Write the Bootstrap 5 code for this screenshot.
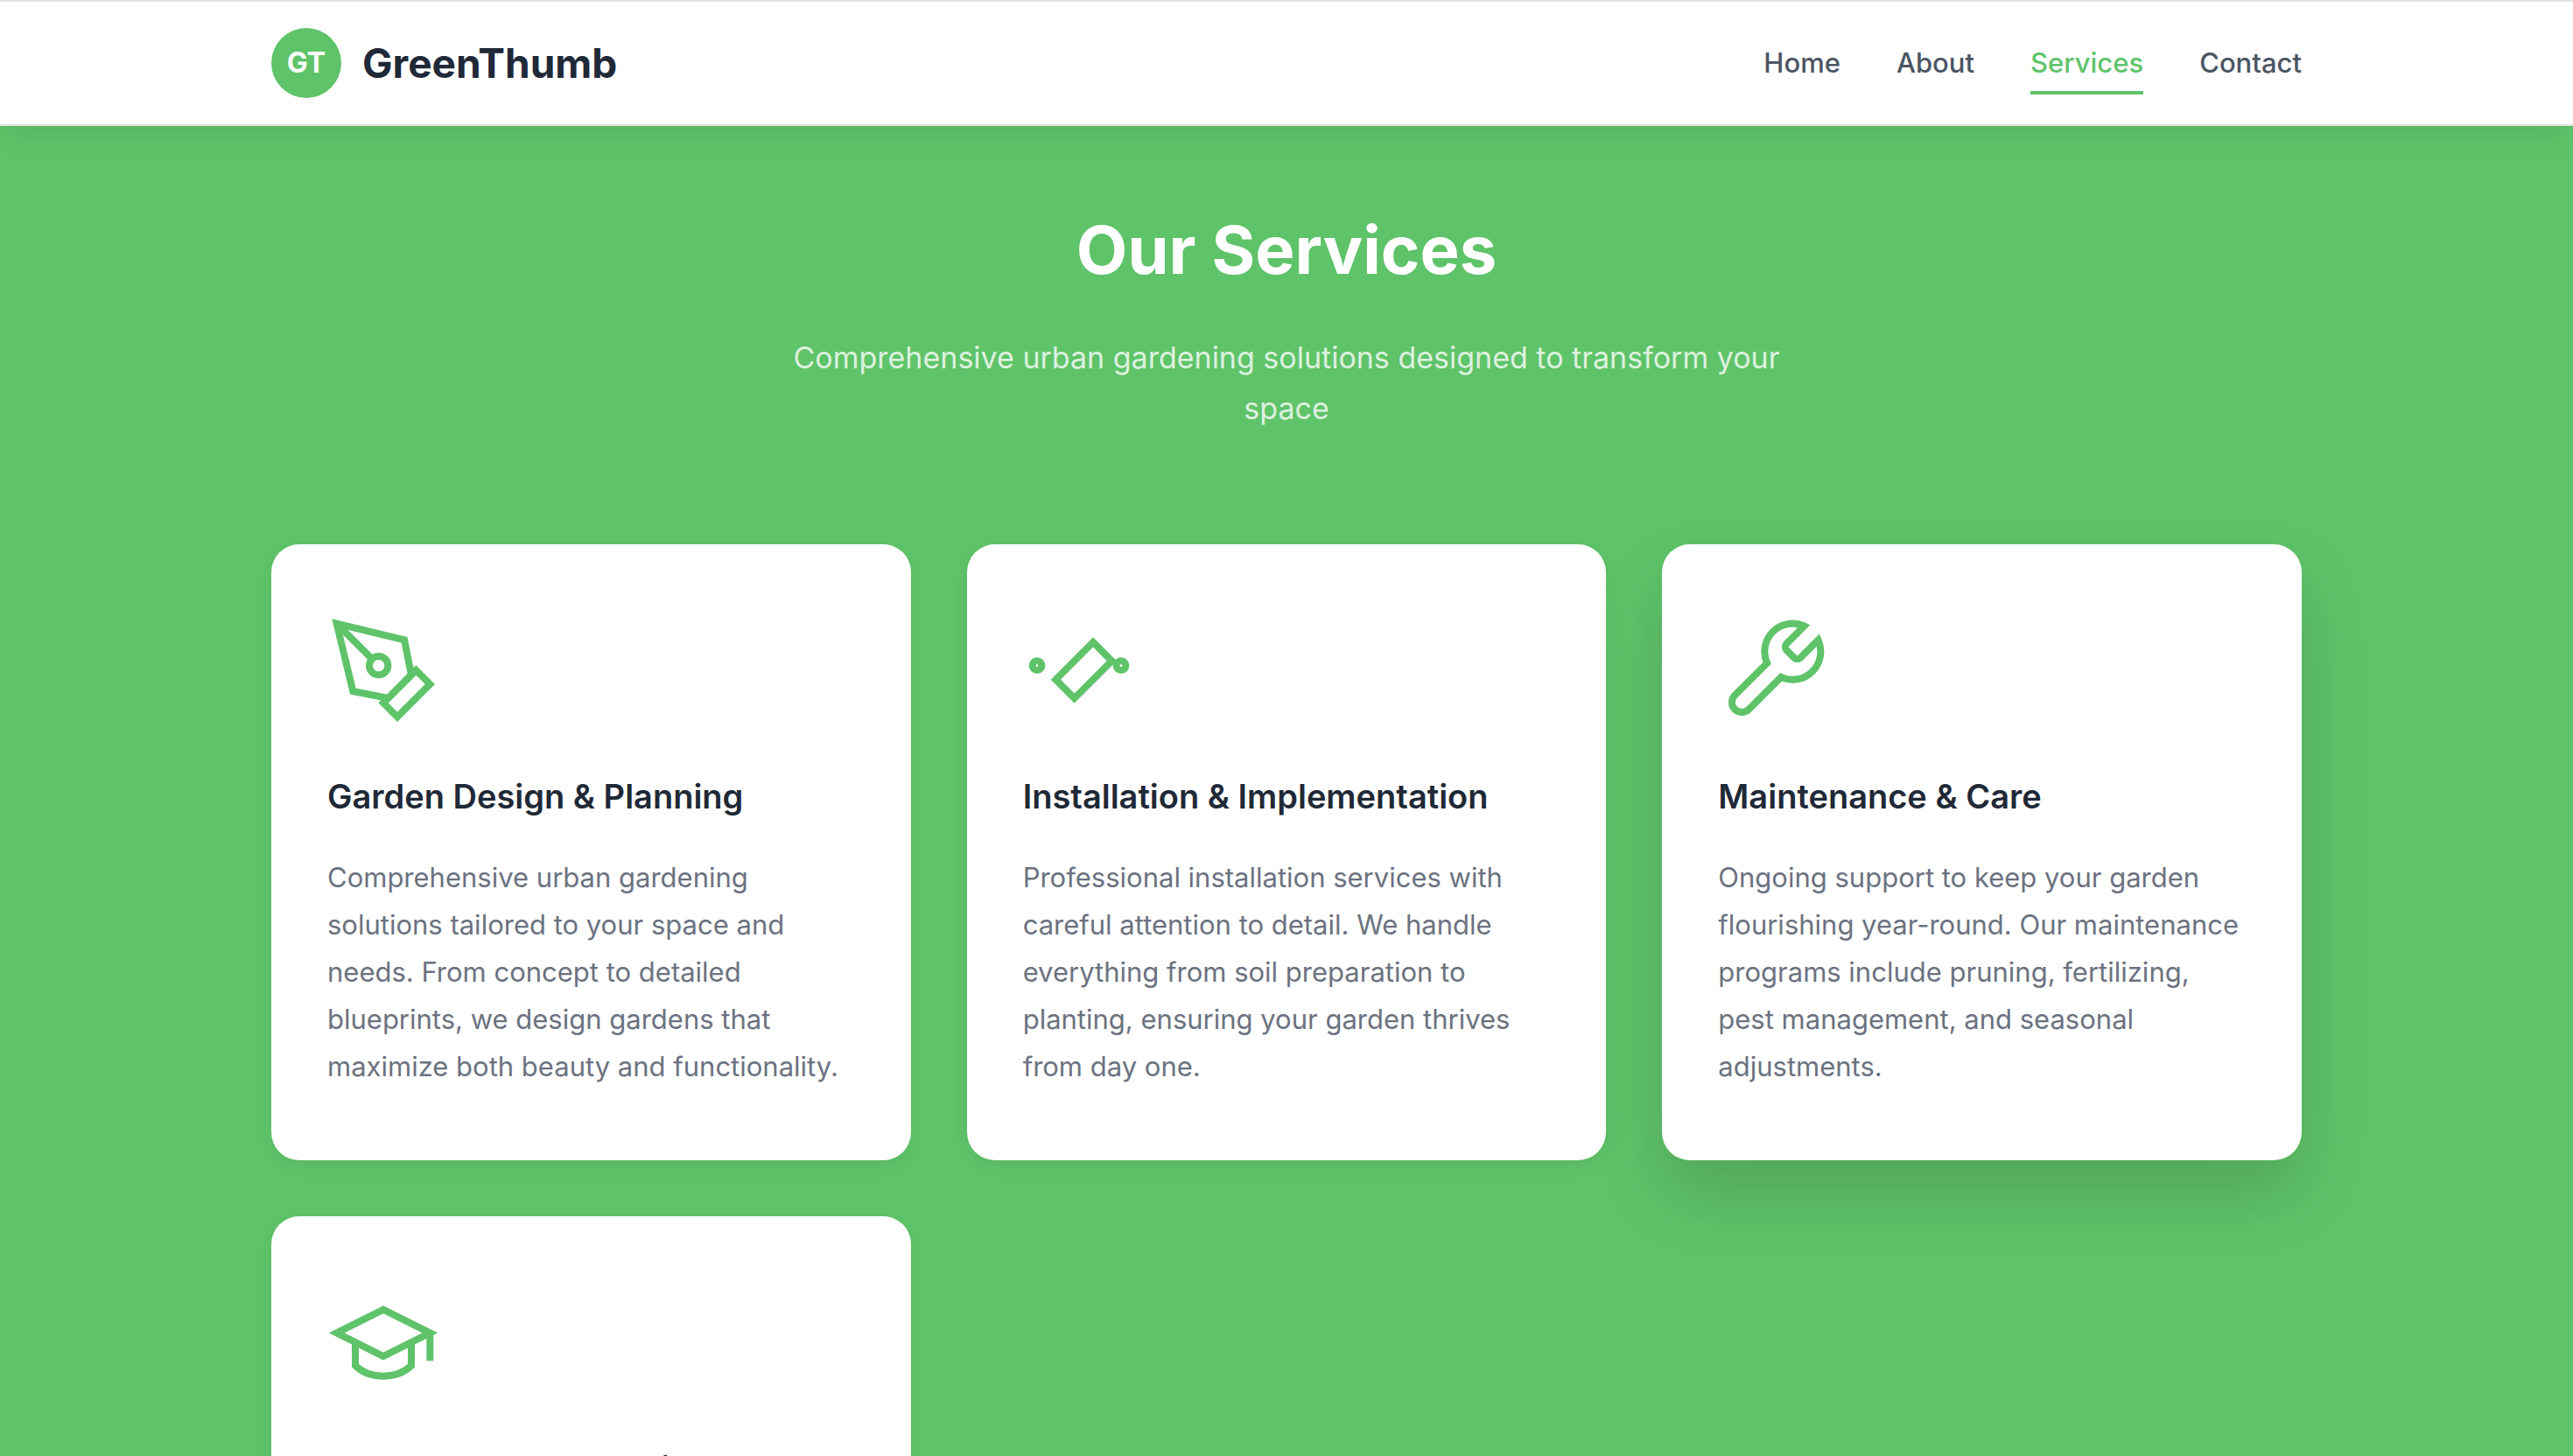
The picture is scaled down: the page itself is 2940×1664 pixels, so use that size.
<!DOCTYPE html>
<html lang="en">
<head>
<meta charset="utf-8">
<meta name="viewport" content="width=device-width, initial-scale=1">
<title>GreenThumb – Services</title>
<link href="https://cdn.jsdelivr.net/npm/bootstrap@5.3.0/dist/css/bootstrap.min.css" rel="stylesheet">
<style>
:root { --leaf: #5fc369; --ink: #1f2937; --slate: #4b5563; --stone: #6b7280; }
body { font-family: Inter, "Liberation Sans", sans-serif; font-size: 31px; background: var(--leaf); color: var(--ink); overflow-x: hidden; }
.page-width { width: 100%; max-width: 2320px; margin-inline: auto; }
.site-bar { border-block: 2px solid #e2e2e2; padding: 30px 0; box-shadow: 0 8px 40px rgba(0, 0, 0, .08); z-index: 2; }
.logo-disc { width: 80px; height: 80px; background: var(--leaf); font-size: 32px; font-weight: 700; line-height: 40px; }
.logo-name { font-size: 46px; font-weight: 700; line-height: 60px; color: var(--ink); }
.site-links { gap: 64px; }
.site-links .nav-link { padding: 16px 0 12px; border-bottom: 4px solid transparent; font-size: 31px; line-height: 40px; font-weight: 500; color: var(--slate); }
.site-links .nav-link.active { color: var(--leaf); border-color: var(--leaf); }
.hero { padding: 93px 0 126px; }
.hero-title { font-size: 76px; font-weight: 700; line-height: 96px; margin-bottom: 47px; }
.hero-text { max-width: 1200px; font-size: 34px; line-height: 58px; color: rgba(255, 255, 255, .8); }
.service-grid { --bs-gutter-x: 64px; --bs-gutter-y: 64px; }
.service-card { border: 0; border-radius: 32px; padding: 80px 64px; box-shadow: 0 8px 24px rgba(0, 0, 0, .06); }
.service-card.raised { box-shadow: 0 40px 80px rgba(0, 0, 0, .15); }
.service-card svg { width: 128px; height: 128px; fill: none; stroke: var(--leaf); stroke-width: 1.5; }
.service-card h2 { font-size: 38px; font-weight: 600; line-height: 52px; margin: 54px 0 40px; }
.service-card p { font-size: 31px; line-height: 54px; color: var(--stone); margin: 0; }
</style>
</head>
<body>
<header class="site-bar bg-white position-relative">
  <div class="page-width d-flex align-items-center justify-content-between">
    <a href="#" class="d-flex align-items-center gap-4 text-decoration-none">
      <span class="logo-disc rounded-circle text-white d-flex align-items-center justify-content-center">GT</span>
      <span class="logo-name">GreenThumb</span>
    </a>
    <nav class="nav site-links">
      <a class="nav-link" href="#">Home</a>
      <a class="nav-link" href="#">About</a>
      <a class="nav-link active" href="#" aria-current="page">Services</a>
      <a class="nav-link" href="#">Contact</a>
    </nav>
  </div>
</header>
<main class="page-width">
  <section class="hero text-center text-white">
    <h1 class="hero-title">Our Services</h1>
    <p class="hero-text mx-auto mb-0">Comprehensive urban gardening solutions designed to transform your space</p>
  </section>
  <section class="row service-grid row-cols-3">
    <div class="col">
      <article class="card service-card h-100">
        <svg viewBox="0 0 24 24" aria-hidden="true"><path d="M12 19l7-7 3 3-7 7-3-3z"/><path d="M18 13l-1.500-7.500L2 2l3.500 14.500L13 18l5-5z"/><path d="M2 2l7.586 7.586"/><circle cx="11" cy="11" r="2"/></svg>
        <h2>Garden Design &amp; Planning</h2>
        <p>Comprehensive urban gardening solutions tailored to your space and needs. From concept to detailed blueprints, we design gardens that maximize both beauty and functionality.</p>
      </article>
    </div>
    <div class="col">
      <article class="card service-card h-100">
        <svg viewBox="0 0 24 24" aria-hidden="true"><path d="M11 18l8-8-4-4-8 8 4 4z"/><circle cx="3" cy="11" r="1"/><circle cx="21" cy="11" r="1"/></svg>
        <h2>Installation &amp; Implementation</h2>
        <p>Professional installation services with careful attention to detail. We handle everything from soil preparation to planting, ensuring your garden thrives from day one.</p>
      </article>
    </div>
    <div class="col">
      <article class="card service-card raised h-100">
        <svg viewBox="0 0 24 24" aria-hidden="true"><path d="M14.700 6.300a1 1 0 0 0 0 1.400l1.600 1.600a1 1 0 0 0 1.400 0l3.770-3.770a6 6 0 0 1-7.940 7.940l-6.910 6.910a2.120 2.120 0 0 1-3-3l6.910-6.910a6 6 0 0 1 7.940-7.940l-3.760 3.760z"/></svg>
        <h2>Maintenance &amp; Care</h2>
        <p>Ongoing support to keep your garden flourishing year-round. Our maintenance programs include pruning, fertilizing, pest management, and seasonal adjustments.</p>
      </article>
    </div>
    <div class="col">
      <article class="card service-card h-100">
        <svg viewBox="0 0 24 24" aria-hidden="true"><path d="M22 10v6M2 10l10-5 10 5-10 5z"/><path d="M6 12v5c3 3 9 3 12 0v-5"/></svg>
        <h2>Workshops &amp; Education</h2>
      </article>
    </div>
  </section>
</main>
<script src="https://cdn.jsdelivr.net/npm/bootstrap@5.3.0/dist/js/bootstrap.bundle.min.js"></script>
</body>
</html>
